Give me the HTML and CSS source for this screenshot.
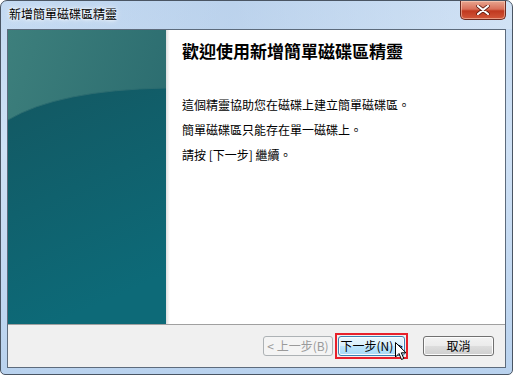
FILE: index.html
```html
<!DOCTYPE html>
<html lang="zh-Hant">
<head>
    <meta charset="UTF-8">
    <title>新增簡單磁碟區精靈</title>
    <link rel="stylesheet" href="styles.css">
</head>
<body>
    <div class="window">
        <div class="titlebar">
            <span class="title">新增簡單磁碟區精靈</span>
            <button class="close-btn">
                <svg width="14" height="10" viewBox="0 0 14 10">
                    <path d="M2 1 L12 9 M12 1 L2 9" stroke="#5a1a10" stroke-width="3.6" stroke-linecap="round"/>
                    <path d="M2 1 L12 9 M12 1 L2 9" stroke="#fff" stroke-width="2.2" stroke-linecap="round"/>
                </svg>
            </button>
        </div>

        <div class="client">
            <div class="main">
                <div class="side">
                    <svg width="158" height="294" viewBox="0 0 158 294" preserveAspectRatio="none">
                        <defs>
                            <linearGradient id="topg" x1="0" y1="0" x2="1" y2="0.6">
                                <stop offset="0" stop-color="#3d7f7c"/>
                                <stop offset="1" stop-color="#296a6e"/>
                            </linearGradient>
                            <linearGradient id="botg" x1="0" y1="0" x2="0.3" y2="1">
                                <stop offset="0" stop-color="#135862"/>
                                <stop offset="1" stop-color="#0d6a78"/>
                            </linearGradient>
                        </defs>
                        <rect width="158" height="294" fill="url(#topg)"/>
                        <path d="M0 90 Q50 60 158 58 L158 294 L0 294 Z" fill="url(#botg)"/>
                        <path d="M0 90 Q50 60 158 58" fill="none" stroke="#2c6c70" stroke-width="1"/>
                    </svg>
                </div>
                <div class="content">
                    <h1>歡迎使用新增簡單磁碟區精靈</h1>
                    <p class="first">這個精靈協助您在磁碟上建立簡單磁碟區。</p>
                    <p>簡單磁碟區只能存在單一磁碟上。</p>
                    <p>請按 [下一步] 繼續。</p>
                </div>
            </div>
            <div class="footer">
                <button class="btn back" disabled>&lt; 上一步(B)</button>
                <span class="focus-ring">
                    <button class="btn hover">下一步(N) &gt;</button>
                    <svg class="cursor" width="12" height="19" viewBox="0 0 12 19">
                        <path d="M0.5 0.5 L0.5 15 L4 11.5 L6.5 17.5 L8.8 16.5 L6.3 10.8 L11 10.8 Z" fill="#fff" stroke="#000" stroke-width="1"/>
                    </svg>
                </span>
                <button class="btn">取消</button>
            </div>
        </div>
    </div>
</body>
</html>
```

FILE: styles.css
```css
html, body {
    margin: 0;
    padding: 0;
    background: #fff;
}
body {
    font-family: "Noto Sans CJK TC", "Liberation Sans", sans-serif;
    font-size: 12px;
    color: #000;
}
.window {
    width: 513px;
    height: 375px;
    box-sizing: border-box;
    border: 1px solid #4a5563;
    border-radius: 7px 7px 5px 5px;
    background: linear-gradient(180deg, #c4daf2 0%, #cfe1f5 40%, #b9d2ee 100%);
    padding: 0 6px 6px 6px;
    display: flex;
    flex-direction: column;
    overflow: hidden;
}
.titlebar {
    height: 28px;
    display: flex;
    align-items: flex-start;
    position: relative;
    background: linear-gradient(90deg, rgba(255,255,255,0) 0%, rgba(170,195,225,0.35) 45%, rgba(255,255,255,0.2) 100%);
    margin: 0 -6px;
    padding: 0 6px;
}
.title {
    margin-top: 5px;
    margin-left: 2px;
    font-size: 12px;
    line-height: 16px;
    color: #000;
    text-shadow: 0 0 6px #fff, 0 0 3px #fff;
}
.close-btn {
    margin-left: auto;
    margin-right: 0;
    width: 46px;
    height: 19px;
    padding: 0;
    border: 1px solid #6b2a20;
    border-top: none;
    border-radius: 0 0 5px 5px;
    background: linear-gradient(180deg, #e8a58f 0%, #d9705a 45%, #c0391f 55%, #d2573a 100%);
    box-shadow: inset 0 0 0 1px rgba(255,220,200,0.5);
    display: flex;
    align-items: center;
    justify-content: center;
}
.client {
    flex: 1;
    border: 1px solid #5d6b7c;
    background: #f0f0f0;
    display: flex;
    flex-direction: column;
}
.main {
    height: 294px;
    display: flex;
    background: #fff;
    border-bottom: 1px solid #a0a0a0;
}
.side {
    width: 158px;
    height: 294px;
    flex: none;
}
.side svg {
    display: block;
}
.content {
    flex: 1;
    padding: 10px 0 0 16px;
    background: linear-gradient(90deg, #dcdcdc 0, #f0f0f0 2px, #fff 4px);
}
.content h1 {
    margin: 0;
    font-size: 17px;
    line-height: 22px;
    font-weight: bold;
}
.content p {
    margin: 0 0 7px 0;
    font-size: 12px;
    line-height: 18px;
}
.content p.first {
    margin-top: 34px;
}
.footer {
    flex: 1;
    display: flex;
    align-items: center;
    padding: 0 11px 0 0;
    justify-content: flex-end;
}
.btn {
    width: 71px;
    height: 20px;
    padding: 0;
    font-family: "Noto Sans CJK TC", "Liberation Sans", sans-serif;
    font-size: 12px;
    line-height: 16px;
    color: #000;
    border: 1px solid #707070;
    border-radius: 3px;
    background: linear-gradient(180deg, #f2f2f2 0%, #ebebeb 49%, #dddddd 50%, #cfcfcf 100%);
    box-shadow: inset 0 0 0 1px #fcfcfc;
}
.btn.back {
    width: 70px;
}
.btn:disabled {
    color: #9a9a9a;
    border-color: #adb2b5;
    background: #f4f4f4;
    box-shadow: none;
}
.btn.hover {
    width: 67px;
    border-color: #3c7fb1;
    background: linear-gradient(180deg, #eaf6fd 0%, #d9f0fc 49%, #bee6fd 50%, #a7d9f5 100%);
}
.focus-ring {
    position: relative;
    display: inline-flex;
    margin: 0 15px 0 2px;
    padding: 1px;
    border: 2px solid #e8202a;
}
.cursor {
    position: absolute;
    left: 58px;
    top: 7px;
}
```
